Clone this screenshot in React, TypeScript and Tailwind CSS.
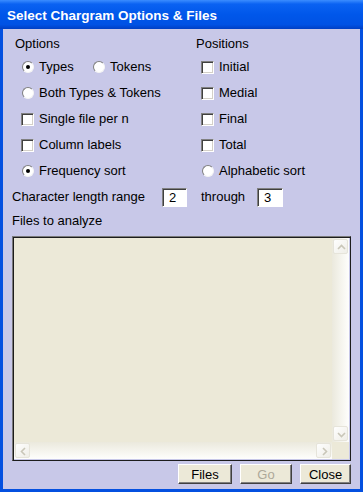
import React from "react"

const Radio = ({ checked }: { checked?: boolean }) => (
    <span className="w-[14px] h-[13px] flex items-center justify-center">
        <span className="w-[12px] h-[12px] rounded-full bg-white border border-t-[#7f7f7f] border-l-[#7f7f7f] border-r-[#f4f4f4] border-b-[#f4f4f4] flex items-center justify-center">
            {checked && <span className="w-[4px] h-[4px] rounded-full bg-black" />}
        </span>
    </span>
)

const Check = () => (
    <span className="w-[14px] h-[13px] flex items-center">
        <span className="w-[13px] h-[13px] bg-white border border-t-[#808080] border-l-[#808080] border-r-white border-b-white shadow-[inset_1px_1px_#404040,inset_-1px_-1px_#d4d0c8]" />
    </span>
)

const Opt = ({ kind, checked, label, className = "" }: any) => (
    <div className={"flex items-center " + className}>
        {kind === "radio" ? <Radio checked={checked} /> : <Check />}
        <span className="ml-[4px]">{label}</span>
    </div>
)

const Arrow = ({ dir }: { dir: string }) => {
    const paths: any = {
        up: "M4 9 L7.5 5.5 L11 9",
        down: "M4 6 L7.5 9.5 L11 6",
        left: "M9 4 L5.5 7.5 L9 11",
        right: "M6 4 L9.5 7.5 L6 11",
    }
    return (
        <div className="w-[17px] h-[17px] p-[1px] shrink-0">
            <div className="w-full h-full rounded-[2px] border border-[#e6e4da] bg-[linear-gradient(to_bottom_right,#fefefe,#efeee7)]">
                <svg width="15" height="15" viewBox="0 0 15 15">
                    <path d={paths[dir]} fill="none" stroke="#c9c6b8" strokeWidth="1.6" />
                </svg>
            </div>
        </div>
    )
}

const Btn = ({ label, disabled, w }: any) => (
    <button
        className={"h-[20px] bg-[#ece9d8] border border-t-white border-l-white border-r-[#404040] border-b-[#404040] shadow-[inset_-1px_-1px_#808080] text-[13px] leading-none " + w + (disabled ? " text-[#aca899]" : " text-black")}
    >
        {label}
    </button>
)

export default function App() {
    return (
        <div className="w-[363px] h-[492px] bg-[#0450e0] flex flex-col font-['Liberation_Sans',Arial,sans-serif] text-[13px] text-black">
            <div className="h-[29px] shrink-0 flex items-center pl-[7px] pt-[3px] bg-[linear-gradient(to_bottom,#3b8dff_0%,#0a62f2_14%,#0057ea_50%,#0052e4_85%,#003fc4_100%)]">
                <span className="text-white font-bold text-[13.5px]">Select Chargram Options &amp; Files</span>
            </div>
            <div className="flex-1 mx-[3px] mb-[3px] bg-[#c8c8e8] flex flex-col pl-[9px] pr-[9px] pt-[7px]">
                <div className="grid grid-cols-[184px_1fr]">
                    <div>
                        <div className="h-[16px] leading-[16px] ml-[3px]">Options</div>
                        <div className="mt-[2px] ml-[9px]">
                            <div className="h-[26px] flex items-center">
                                <Opt kind="radio" checked label="Types" className="w-[71px]" />
                                <Opt kind="radio" label="Tokens" />
                            </div>
                            <div className="h-[26px] flex items-center"><Opt kind="radio" label="Both Types & Tokens" /></div>
                            <div className="h-[26px] flex items-center"><Opt kind="check" label="Single file per n" /></div>
                            <div className="h-[26px] flex items-center"><Opt kind="check" label="Column labels" /></div>
                            <div className="h-[26px] flex items-center"><Opt kind="radio" checked label="Frequency sort" /></div>
                        </div>
                    </div>
                    <div>
                        <div className="h-[16px] leading-[16px]">Positions</div>
                        <div className="mt-[2px] ml-[5px]">
                            <div className="h-[26px] flex items-center"><Opt kind="check" label="Initial" /></div>
                            <div className="h-[26px] flex items-center"><Opt kind="check" label="Medial" /></div>
                            <div className="h-[26px] flex items-center"><Opt kind="check" label="Final" /></div>
                            <div className="h-[26px] flex items-center"><Opt kind="check" label="Total" /></div>
                            <div className="h-[26px] flex items-center"><Opt kind="radio" label="Alphabetic sort" /></div>
                        </div>
                    </div>
                </div>
                <div className="h-[26px] flex items-center">
                    <span className="w-[150px]">Character length range</span>
                    <span className="w-[25px] h-[19px] bg-white border border-t-[#808080] border-l-[#808080] border-r-white border-b-white shadow-[inset_1px_1px_#404040] pl-[6px] leading-[17px]">2</span>
                    <span className="ml-[14px] w-[56px]">through</span>
                    <span className="w-[26px] h-[19px] bg-white border border-t-[#808080] border-l-[#808080] border-r-white border-b-white shadow-[inset_1px_1px_#404040] pl-[6px] leading-[17px]">3</span>
                </div>
                <div className="h-[16px] leading-[16px] mt-[3px]">Files to analyze</div>
                <div className="mt-[7px] h-[225px] border border-t-[#7a7a7a] border-l-[#7a7a7a] border-r-[#1c1c1c] border-b-[#1c1c1c] shadow-[inset_1px_1px_#1c1c1c] p-[1px] flex">
                    <div className="flex-1 flex flex-col">
                        <div className="flex-1 bg-[#ece9d8]" />
                        <div className="h-[17px] flex bg-[linear-gradient(to_bottom,#ebe9dd,#fefefc)]">
                            <Arrow dir="left" />
                            <div className="flex-1" />
                            <Arrow dir="right" />
                        </div>
                    </div>
                    <div className="w-[17px] flex flex-col">
                        <div className="flex-1 flex flex-col bg-[linear-gradient(to_right,#ebe9dd,#fefefc)]">
                            <Arrow dir="up" />
                            <div className="flex-1" />
                            <Arrow dir="down" />
                        </div>
                        <div className="h-[17px] bg-[#ece9d8]" />
                    </div>
                </div>
                <div className="mt-[3px] flex justify-end gap-[8px]">
                    <Btn label="Files" w="w-[54px]" />
                    <Btn label="Go" disabled w="w-[52px]" />
                    <Btn label="Close" w="w-[51px]" />
                </div>
            </div>
        </div>
    )
}
